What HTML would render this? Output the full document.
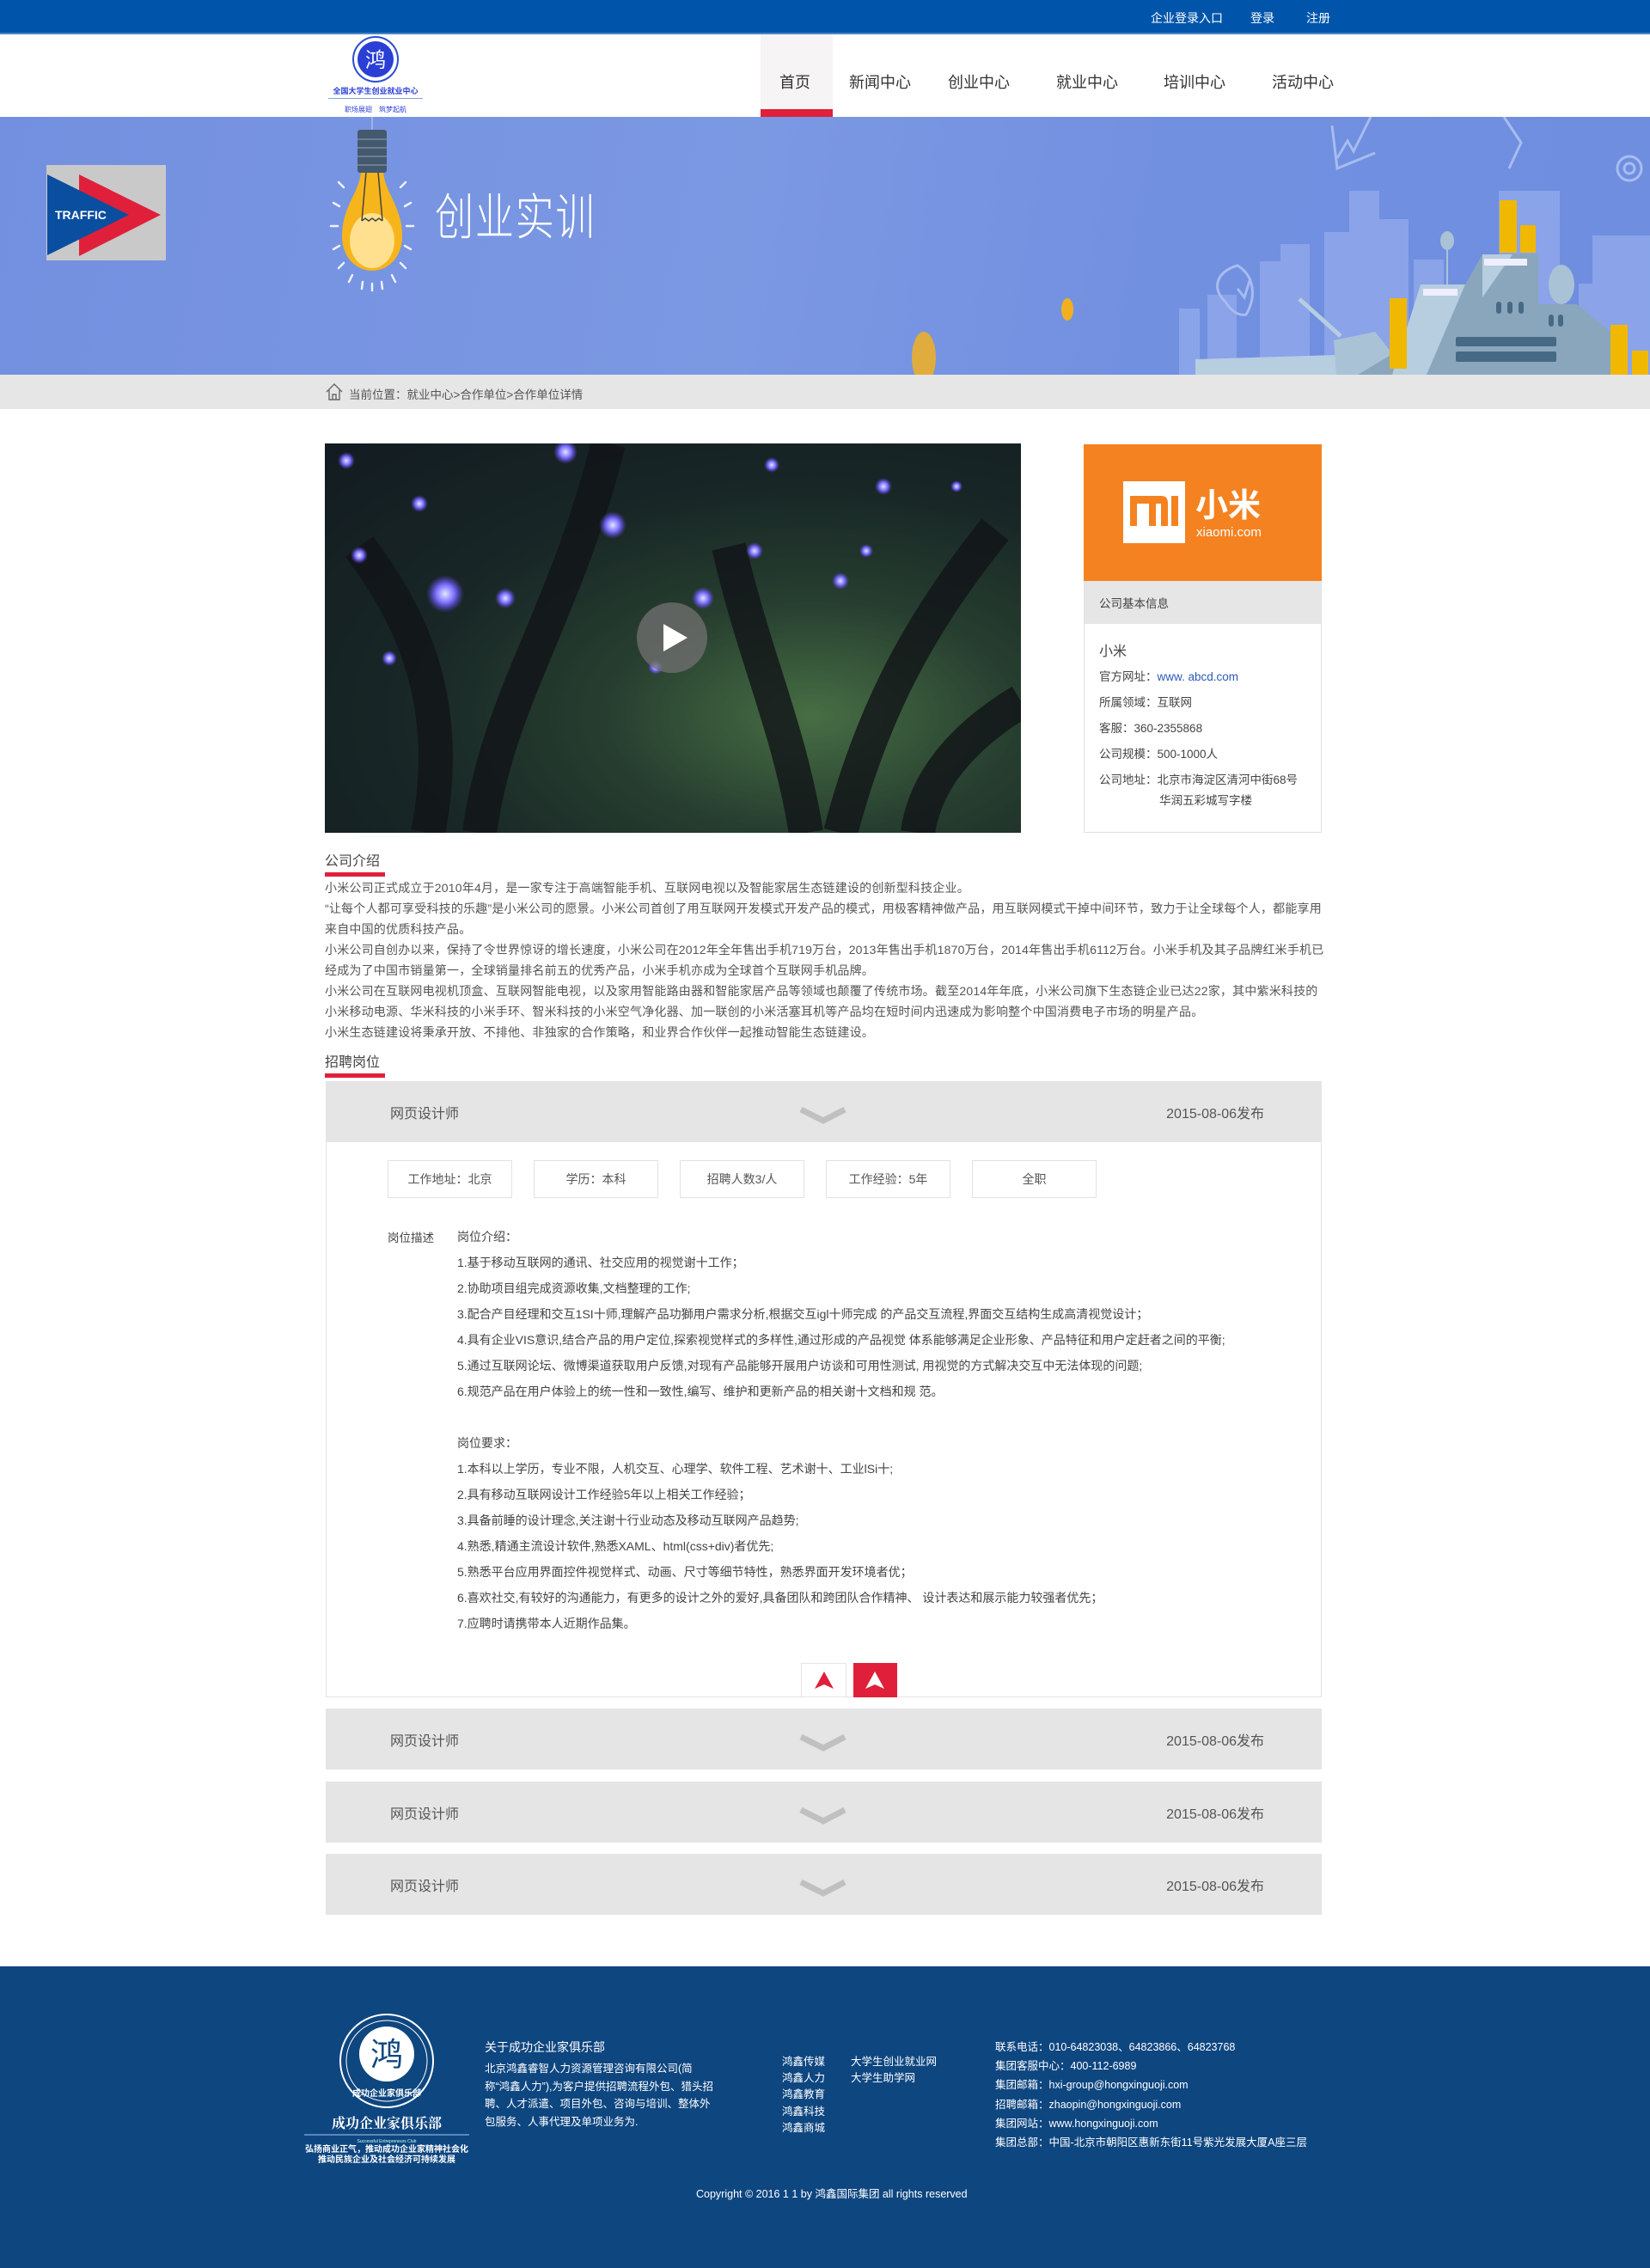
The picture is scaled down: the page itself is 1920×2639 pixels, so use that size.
<!DOCTYPE html>
<html><head><meta charset="utf-8">
<style>
*{margin:0;padding:0;box-sizing:border-box}
body{width:1920px;height:2639px;position:relative;background:#fff;font-family:"Liberation Sans","Noto Sans CJK SC",sans-serif;color:#555;overflow:hidden}
.a{position:absolute;white-space:nowrap}
.top{position:absolute;left:0;top:0;width:1920px;height:40px;background:#0055ab;border-bottom:2px solid #4d86c6}
.top span{position:absolute;top:11px;color:#fff;font-size:14px}
.nav span{position:absolute;top:82px;font-size:18px;color:#333}
.banner{position:absolute;left:0;top:136px;width:1920px;height:300px;background:linear-gradient(100deg,#7390e0 0%,#7b98e3 45%,#7290e0 70%,#6f8ee0 100%)}
.crumb{position:absolute;left:0;top:436px;width:1920px;height:40px;background:#e6e6e6}
.para{position:absolute;left:378px;top:1021px;width:1164px;font-size:14px;letter-spacing:0.2px;line-height:24px;color:#555;white-space:normal}
.h2{position:absolute;left:378px;font-size:16px;color:#444}
.h2 i{position:absolute;left:0;top:27px;width:70px;height:5px;background:#e0203a}
.row{position:absolute;left:379px;width:1159px;height:71px;background:#e5e5e5}
.row .t{position:absolute;left:75px;top:24px;font-size:16px;color:#555}
.row .d{position:absolute;right:67px;top:24px;font-size:16px;color:#555}
.row svg{position:absolute;left:551px;top:28px}
.tag{position:absolute;top:1350px;width:145px;height:44px;border:1px solid #e2e2e2;text-align:center;line-height:42px;font-size:14px;color:#555}
.jd{position:absolute;left:532px;font-size:14px;color:#444}
.ft{position:absolute;color:#fff;font-size:12.5px;white-space:nowrap}
</style></head><body>

<div class="top">
<span style="left:1339px">企业登录入口</span>
<span style="left:1455px">登录</span>
<span style="left:1520px">注册</span>
</div>

<svg class="a" style="left:370px;top:40px" width="140" height="96" viewBox="0 0 140 96">
<circle cx="67" cy="29" r="26" fill="#fff" stroke="#2a4fd0" stroke-width="2"/>
<circle cx="67" cy="29" r="21" fill="#2a3fd6"/>
<text x="67" y="38" font-size="24" fill="#fff" text-anchor="middle" font-family="Noto Sans CJK SC">鸿</text>
<text x="67" y="69" font-size="9" fill="#2a3fd6" text-anchor="middle" font-weight="bold" font-family="Noto Sans CJK SC">全国大学生创业就业中心</text>
<rect x="12" y="74" width="110" height="1" fill="#8aa0e0"/>
<text x="67" y="90" font-size="8" fill="#2a3fd6" text-anchor="middle" font-family="Noto Sans CJK SC">职场展翅　筑梦起航</text>
</svg>

<div class="nav">
<div class="a" style="left:885px;top:40px;width:84px;height:96px;background:#f6f4f4"></div>
<div class="a" style="left:885px;top:127px;width:84px;height:9px;background:#e0203a"></div>
<span style="left:907px">首页</span>
<span style="left:988px">新闻中心</span>
<span style="left:1103px">创业中心</span>
<span style="left:1229px">就业中心</span>
<span style="left:1354px">培训中心</span>
<span style="left:1480px">活动中心</span>
</div>

<div class="banner">
<svg width="1920" height="300" viewBox="0 0 1920 300" style="position:absolute;left:0;top:0">
<rect x="54" y="56" width="139" height="111" fill="#c9c9c9"/>
<polygon points="92,67 187,114 92,162" fill="#e0203a"/>
<polygon points="55,67 150,114 55,161" fill="#0a4ea0"/>
<text x="64" y="119" font-size="14" font-weight="bold" fill="#fff" font-family="Liberation Sans">TRAFFIC</text>
<line x1="433" y1="0" x2="433" y2="20" stroke="#c8d2f0" stroke-width="1"/>
<g transform="translate(0,-136)">
<g stroke="#eef2ff" stroke-width="2.5" stroke-linecap="round">
<line x1="393" y1="263" x2="385" y2="263"/><line x1="473" y1="263" x2="481" y2="263"/>
<line x1="395" y1="240" x2="388" y2="236"/><line x1="471" y1="240" x2="478" y2="236"/>
<line x1="400" y1="218" x2="394" y2="212"/><line x1="466" y1="218" x2="472" y2="212"/>
<line x1="395" y1="286" x2="388" y2="290"/><line x1="471" y1="286" x2="478" y2="290"/>
<line x1="400" y1="306" x2="394" y2="312"/><line x1="466" y1="306" x2="472" y2="312"/>
<line x1="410" y1="320" x2="406" y2="328"/><line x1="456" y1="320" x2="460" y2="328"/>
<line x1="422" y1="328" x2="421" y2="336"/><line x1="444" y1="328" x2="445" y2="336"/><line x1="433" y1="330" x2="433" y2="338"/>
</g>
<path d="M420 200 C418 225 398 240 398 275 C398 300 415 315 433 315 C451 315 468 300 468 275 C468 240 448 225 446 200 Z" fill="#f7b51c"/>
<ellipse cx="433" cy="280" rx="26" ry="32" fill="#ffe08f"/>
<path d="M426 200 L421 257 M440 200 L445 257 M421 257 l4 -3 l4 3 l4 -3 l4 3 l4 -3 l4 3" stroke="#444" stroke-width="1.5" fill="none"/>
</g>
<rect x="416" y="15" width="34" height="50" rx="3" fill="#45596e"/>
<g stroke="#6a7f94" stroke-width="2"><line x1="416" y1="26" x2="450" y2="26"/><line x1="416" y1="36" x2="450" y2="36"/><line x1="416" y1="46" x2="450" y2="46"/><line x1="416" y1="56" x2="450" y2="56"/></g>
<g fill="#8da6ea" opacity="0.9">
<rect x="1372" y="223" width="24" height="77"/><rect x="1405" y="207" width="34" height="93"/>
<rect x="1466" y="168" width="35" height="132"/><rect x="1490" y="148" width="34" height="152"/>
<rect x="1541" y="134" width="36" height="166"/><rect x="1570" y="86" width="35" height="214"/>
<rect x="1600" y="119" width="39" height="181"/><rect x="1645" y="166" width="35" height="134"/>
<rect x="1744" y="86" width="71" height="214"/><rect x="1853" y="138" width="67" height="162"/>
<rect x="1837" y="194" width="28" height="106"/>
</g>
<g fill="none" stroke="#a8bcf0" stroke-width="3">
<path d="M1425 214 C1410 200 1415 180 1440 173 C1460 185 1462 210 1450 230 C1440 232 1432 225 1425 214Z"/>
<path d="M1440 200 L1448 210 L1455 188"/>
<path d="M1550 10 L1556 60 L1600 42 M1556 48 L1568 28 L1575 40 L1595 0"/>
<path d="M1750 0 L1770 30 L1756 60"/>
<circle cx="1896" cy="60" r="14"/><circle cx="1896" cy="60" r="6"/>
</g>
<polygon points="1391,282 1555,277 1560,300 1391,300" fill="#b7cde0"/>
<polygon points="1552,260 1600,250 1640,300 1555,300" fill="#a9c2d6"/>
<line x1="1512" y1="212" x2="1560" y2="255" stroke="#b7cde0" stroke-width="5"/>
<polygon points="1653,195 1705,195 1725,160 1790,160 1790,218 1835,218 1880,255 1880,300 1580,300 1630,270" fill="#8aa6bd"/>
<polygon points="1653,195 1705,195 1660,300 1620,300" fill="#b7cde0"/>
<polygon points="1725,160 1760,160 1725,210" fill="#b7cde0"/>
<rect x="1656" y="200" width="40" height="8" fill="#eef"/><rect x="1727" y="165" width="50" height="8" fill="#eef"/>
<line x1="1684" y1="150" x2="1684" y2="195" stroke="#a9c2d6" stroke-width="2"/><ellipse cx="1684" cy="144" rx="8" ry="11" fill="#a9c2d6"/>
<ellipse cx="1817" cy="195" rx="15" ry="23" fill="#a9c2d6"/>
<rect x="1694" y="256" width="117" height="11" rx="2" fill="#466a85"/><rect x="1694" y="273" width="117" height="12" rx="2" fill="#466a85"/>
<g fill="#466a85"><rect x="1741" y="215" width="6" height="14" rx="3"/><rect x="1754" y="215" width="6" height="14" rx="3"/><rect x="1767" y="215" width="6" height="14" rx="3"/><rect x="1802" y="230" width="6" height="14" rx="3"/><rect x="1813" y="230" width="6" height="14" rx="3"/></g>
<g fill="#f0b800"><rect x="1617" y="211" width="20" height="82"/><rect x="1745" y="97" width="20" height="61"/><rect x="1769" y="126" width="18" height="32"/><rect x="1874" y="242" width="20" height="58"/><rect x="1899" y="272" width="19" height="28"/></g>
<ellipse cx="1242" cy="224" rx="7" ry="13" fill="#f2b020"/>
<ellipse cx="1075" cy="280" rx="14" ry="30" fill="#f2b020" opacity="0.85"/>
</svg>
<div class="a" style="left:506px;top:70px;font-size:58px;color:#fff;font-weight:300;transform:scaleX(0.78);transform-origin:left top;font-family:'Noto Sans CJK SC',sans-serif;letter-spacing:2px">创业实训</div>
</div>

<div class="crumb">
<svg class="a" style="left:378px;top:9px" width="22" height="22" viewBox="0 0 22 22"><path d="M2 11 L11 2 L20 11 M5 9 V20 H17 V9 M9 20 V14 H13 V20" fill="none" stroke="#666" stroke-width="1.4"/></svg>
<div class="a" style="left:406px;top:12px;font-size:13.5px;color:#555">当前位置：就业中心&gt;合作单位&gt;合作单位详情</div>
</div>

<div class="a" style="left:378px;top:516px;width:810px;height:453px;overflow:hidden;background:radial-gradient(ellipse at 70% 70%,#5a8a50 0%,#2e4a35 30%,#1b2a28 60%,#141c22 100%)">
<svg width="810" height="453">
<defs><radialGradient id="g"><stop offset="0" stop-color="#e0e6ff"/><stop offset="0.5" stop-color="#7a6cff"/><stop offset="1" stop-color="#5a40e0" stop-opacity="0"/></radialGradient></defs>
<rect x="0" y="0" width="810" height="453" fill="#0f1a1e" opacity="0.25"/>
<path d="M120 453 C150 300 100 200 40 120 M180 453 C200 300 280 200 330 0 M560 453 C540 330 500 250 470 120 M600 453 C640 300 700 200 780 100 M690 453 C700 380 760 330 810 300" stroke="#121418" stroke-width="40" fill="none" opacity="0.8"/>
<g fill="url(#g)">
<circle cx="140" cy="175" r="22"/><circle cx="335" cy="95" r="16"/><circle cx="210" cy="180" r="12"/><circle cx="280" cy="10" r="14"/>
<circle cx="440" cy="180" r="13"/><circle cx="600" cy="160" r="10"/><circle cx="40" cy="130" r="10"/><circle cx="110" cy="70" r="10"/>
<circle cx="500" cy="125" r="10"/><circle cx="385" cy="260" r="9"/><circle cx="650" cy="50" r="10"/><circle cx="25" cy="20" r="10"/>
<circle cx="630" cy="125" r="8"/><circle cx="75" cy="250" r="9"/><circle cx="520" cy="25" r="9"/><circle cx="735" cy="50" r="7"/>
</g>
</svg>
<div class="a" style="left:363px;top:185px;width:82px;height:82px;border-radius:50%;background:rgba(110,110,110,0.8)"></div>
<svg class="a" style="left:390px;top:208px" width="36" height="36"><polygon points="4,2 32,18 4,34" fill="#fff"/></svg>
</div>

<div class="a" style="left:1261px;top:517px;width:277px;height:452px;border:1px solid #e2e2e2"></div>
<div class="a" style="left:1261px;top:517px;width:277px;height:159px;background:#f58220"></div>
<svg class="a" style="left:1307px;top:560px" width="72" height="72" viewBox="0 0 72 72"><rect width="72" height="72" fill="#fff"/><path d="M8 52 V17 H44 C50 17 52 20 52 26 V52 H44 V26 H38 V52 H30 V26 H16 V52 Z M56 17 H64 V52 H56 Z" fill="#f58220"/></svg>
<div class="a" style="left:1391px;top:562px;font-size:38px;color:#fff;font-weight:bold;font-family:'Noto Sans CJK SC',sans-serif;line-height:46px">小米</div>
<div class="a" style="left:1392px;top:611px;font-size:15px;color:#fff">xiaomi.com</div>
<div class="a" style="left:1262px;top:676px;width:275px;height:50px;background:#e6e6e6"></div>
<div class="a" style="left:1279px;top:691px;font-size:13.5px;color:#444">公司基本信息</div>
<div class="a" style="left:1279px;top:744px;font-size:16px;color:#444">小米</div>
<div class="a" style="left:1279px;top:776px;font-size:13.5px;color:#444">官方网址：<span style="color:#2a5ab8">www. abcd.com</span></div>
<div class="a" style="left:1279px;top:806px;font-size:13.5px;color:#444">所属领域：互联网</div>
<div class="a" style="left:1279px;top:836px;font-size:13.5px;color:#444">客服：360-2355868</div>
<div class="a" style="left:1279px;top:866px;font-size:13.5px;color:#444">公司规模：500-1000人</div>
<div class="a" style="left:1279px;top:896px;font-size:13.5px;color:#444">公司地址：北京市海淀区清河中街68号</div>
<div class="a" style="left:1349px;top:920px;font-size:13.5px;color:#444">华润五彩城写字楼</div>

<div class="h2" style="top:988px">公司介绍<i></i></div>
<div class="para">小米公司正式成立于2010年4月，是一家专注于高端智能手机、互联网电视以及智能家居生态链建设的创新型科技企业。<br>“让每个人都可享受科技的乐趣”是小米公司的愿景。小米公司首创了用互联网开发模式开发产品的模式，用极客精神做产品，用互联网模式干掉中间环节，致力于让全球每个人，都能享用来自中国的优质科技产品。<br>小米公司自创办以来，保持了令世界惊讶的增长速度，小米公司在2012年全年售出手机719万台，2013年售出手机1870万台，2014年售出手机6112万台。小米手机及其子品牌红米手机已经成为了中国市销量第一，全球销量排名前五的优秀产品，小米手机亦成为全球首个互联网手机品牌。<br>小米公司在互联网电视机顶盒、互联网智能电视，以及家用智能路由器和智能家居产品等领域也颠覆了传统市场。截至2014年年底，小米公司旗下生态链企业已达22家，其中紫米科技的小米移动电源、华米科技的小米手环、智米科技的小米空气净化器、加一联创的小米活塞耳机等产品均在短时间内迅速成为影响整个中国消费电子市场的明星产品。<br>小米生态链建设将秉承开放、不排他、非独家的合作策略，和业界合作伙伴一起推动智能生态链建设。</div>

<div class="h2" style="top:1222px">招聘岗位<i></i></div>

<div class="a" style="left:379px;top:1258px;width:1159px;height:717px;border:1px solid #e2e2e2"></div>
<div class="row" style="top:1258px"><span class="t">网页设计师</span><svg width="56" height="22"><polyline points="2,5 28,18 53,5" fill="none" stroke="#c0c0c0" stroke-width="7"/></svg><span class="d">2015-08-06发布</span></div>
<div class="tag" style="left:451px">工作地址：北京</div>
<div class="tag" style="left:621px">学历：本科</div>
<div class="tag" style="left:791px">招聘人数3/人</div>
<div class="tag" style="left:961px">工作经验：5年</div>
<div class="tag" style="left:1131px">全职</div>
<div class="a" style="left:451px;top:1429px;font-size:13.5px;color:#444">岗位描述</div>
<div class="jd" style="top:1429px">岗位介绍：</div>
<div class="jd" style="top:1459px">1.基于移动互联网的通讯、社交应用的视觉谢十工作；</div>
<div class="jd" style="top:1489px">2.协助项目组完成资源收集,文档整理的工作;</div>
<div class="jd" style="top:1519px">3.配合产目经理和交互1SI十师,理解产品功獅用户需求分析,根据交互igl十师完成 的产品交互流程,界面交互结构生成高清视觉设计；</div>
<div class="jd" style="top:1549px">4.具有企业VIS意识,结合产品的用户定位,探索视觉样式的多样性,通过形成的产品视觉 体系能够满足企业形象、产品特征和用户定赶者之间的平衡;</div>
<div class="jd" style="top:1579px">5.通过互联网论坛、微博渠道获取用户反馈,对现有产品能够开展用户访谈和可用性测试, 用视觉的方式解决交互中无法体现的问题;</div>
<div class="jd" style="top:1609px">6.规范产品在用户体验上的统一性和一致性,编写、维护和更新产品的相关谢十文档和规 范。</div>
<div class="jd" style="top:1669px">岗位要求：</div>
<div class="jd" style="top:1699px">1.本科以上学历，专业不限，人机交互、心理学、软件工程、艺术谢十、工业lSi十;</div>
<div class="jd" style="top:1729px">2.具有移动互联网设计工作经验5年以上相关工作经验；</div>
<div class="jd" style="top:1759px">3.具备前睡的设计理念,关注谢十行业动态及移动互联网产品趋势;</div>
<div class="jd" style="top:1789px">4.熟悉,精通主流设计软件,熟悉XAML、html(css+div)者优先;</div>
<div class="jd" style="top:1819px">5.熟悉平台应用界面控件视觉样式、动画、尺寸等细节特性，熟悉界面开发环境者优；</div>
<div class="jd" style="top:1849px">6.喜欢社交,有较好的沟通能力，有更多的设计之外的爱好,具备团队和跨团队合作精神、 设计表达和展示能力较强者优先；</div>
<div class="jd" style="top:1879px">7.应聘时请携带本人近期作品集。</div>
<div class="a" style="left:932px;top:1935px;width:53px;height:40px;border:1px solid #e5e5e5;background:#fff"></div>
<svg class="a" style="left:947px;top:1944px" width="24" height="22"><polygon points="12,1 23,21 12,16 1,21" fill="#e0203a"/></svg>
<div class="a" style="left:993px;top:1935px;width:51px;height:40px;background:#e0203a"></div>
<svg class="a" style="left:1006px;top:1944px" width="24" height="22"><polygon points="12,1 23,21 12,16 1,21" fill="#fff"/></svg>

<div class="row" style="top:1988px"><span class="t">网页设计师</span><svg width="56" height="22"><polyline points="2,5 28,18 53,5" fill="none" stroke="#c0c0c0" stroke-width="7"/></svg><span class="d">2015-08-06发布</span></div>
<div class="row" style="top:2073px"><span class="t">网页设计师</span><svg width="56" height="22"><polyline points="2,5 28,18 53,5" fill="none" stroke="#c0c0c0" stroke-width="7"/></svg><span class="d">2015-08-06发布</span></div>
<div class="row" style="top:2157px"><span class="t">网页设计师</span><svg width="56" height="22"><polyline points="2,5 28,18 53,5" fill="none" stroke="#c0c0c0" stroke-width="7"/></svg><span class="d">2015-08-06发布</span></div>

<div class="a" style="left:0;top:2288px;width:1920px;height:351px;background:#0e4680"></div>
<svg class="a" style="left:350px;top:2338px" width="200" height="180" viewBox="0 0 200 180">
<circle cx="100" cy="60" r="54" fill="none" stroke="#fff" stroke-width="2"/>
<circle cx="100" cy="60" r="47" fill="none" stroke="#fff" stroke-width="1"/>
<circle cx="100" cy="52" r="32" fill="#fff"/>
<text x="100" y="66" font-size="38" fill="#0e4680" text-anchor="middle" font-family="Noto Sans CJK SC">鸿</text>
<text x="100" y="101" font-size="10" fill="#fff" text-anchor="middle" font-weight="bold" font-family="Noto Sans CJK SC">成功企业家俱乐部</text>
<text x="100" y="138" font-size="16" fill="#fff" text-anchor="middle" font-weight="bold" font-family="Noto Serif CJK SC">成功企业家俱乐部</text>
<rect x="4" y="145" width="192" height="2" fill="#5d86b8"/>
<text x="100" y="155" font-size="5" fill="#cfe" text-anchor="middle">Successful Entrepreneurs Club</text>
<text x="100" y="166" font-size="10" fill="#fff" text-anchor="middle" font-weight="bold" font-family="Noto Sans CJK SC">弘扬商业正气，推动成功企业家精神社会化</text>
<text x="100" y="178" font-size="10" fill="#fff" text-anchor="middle" font-weight="bold" font-family="Noto Sans CJK SC">推动民族企业及社会经济可持续发展</text>
</svg>
<div class="ft" style="left:564px;top:2372px;font-size:14px">关于成功企业家俱乐部</div>
<div class="ft" style="left:564px;top:2397px;width:270px;white-space:normal;line-height:20.5px">北京鸿鑫睿智人力资源管理咨询有限公司(简称“鸿鑫人力”),为客户提供招聘流程外包、猎头招聘、人才派遣、项目外包、咨询与培训、整体外包服务、人事代理及单项业务为.</div>
<div class="ft" style="left:910px;top:2390px;line-height:19.2px">鸿鑫传媒<br>鸿鑫人力<br>鸿鑫教育<br>鸿鑫科技<br>鸿鑫商城</div>
<div class="ft" style="left:990px;top:2390px;line-height:19.2px">大学生创业就业网<br>大学生助学网</div>
<div class="ft" style="left:1158px;top:2371px;line-height:22.2px">联系电话：010-64823038、64823866、64823768<br>集团客服中心：400-112-6989<br>集团邮箱：hxi-group@hongxinguoji.com<br>招聘邮箱：zhaopin@hongxinguoji.com<br>集团网站：www.hongxinguoji.com<br>集团总部：中国-北京市朝阳区惠新东街11号紫光发展大厦A座三层</div>
<div class="ft" style="left:810px;top:2542px">Copyright © 2016 1 1 by 鸿鑫国际集团 all rights reserved</div>
</body></html>
